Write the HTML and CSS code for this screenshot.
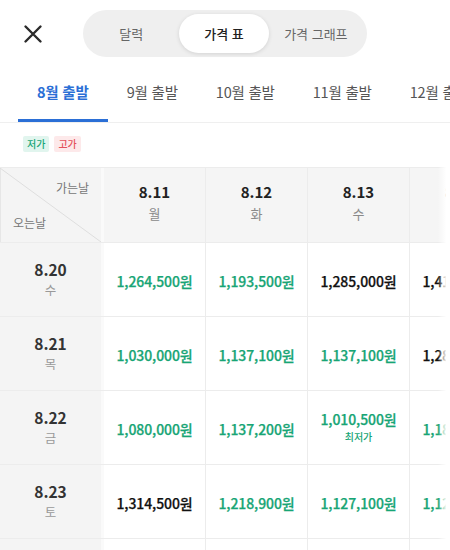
FILE: index.html
```html
<!DOCTYPE html>
<html lang="ko">
<head>
<meta charset="utf-8">
<link rel="stylesheet" href="styles.css">
</head>
<body>
<div class="page">
  <header class="topbar">
    <button class="close" aria-label="닫기">
      <svg width="20" height="20" viewBox="0 0 20 20"><path d="M2.5 2.5 L17.5 17.5 M17.5 2.5 L2.5 17.5" stroke="#2b2b2b" stroke-width="2.4" stroke-linecap="round" fill="none"/></svg>
    </button>
    <div class="segment">
      <span class="seg">달력</span>
      <span class="seg active">가격 표</span>
      <span class="seg">가격 그래프</span>
    </div>
  </header>

  <nav class="tabs">
    <span class="tab active">8월 출발</span>
    <span class="tab">9월 출발</span>
    <span class="tab">10월 출발</span>
    <span class="tab">11월 출발</span>
    <span class="tab">12월 출발</span>
  </nav>

  <div class="legend">
    <span class="tag low">저가</span>
    <span class="tag high">고가</span>
  </div>

  <div class="table-wrap">
    <div class="table">
      <div class="row head">
        <div class="cell corner">
          <svg class="diag" viewBox="0 0 100 100" preserveAspectRatio="none"><line x1="0" y1="0" x2="100" y2="100" stroke="#dedede" stroke-width="1" vector-effect="non-scaling-stroke"/></svg>
          <span class="go">가는날</span>
          <span class="back">오는날</span>
        </div>
        <div class="cell hd"><b>8.11</b><i>월</i></div>
        <div class="cell hd"><b>8.12</b><i>화</i></div>
        <div class="cell hd"><b>8.13</b><i>수</i></div>
        <div class="cell hd"><b>8.14</b><i>목</i></div>
      </div>
      <div class="row">
        <div class="cell rh"><b>8.20</b><i>수</i></div>
        <div class="cell price low">1,264,500원</div>
        <div class="cell price low">1,193,500원</div>
        <div class="cell price">1,285,000원</div>
        <div class="cell price">1,412,000원</div>
      </div>
      <div class="row">
        <div class="cell rh"><b>8.21</b><i>목</i></div>
        <div class="cell price low">1,030,000원</div>
        <div class="cell price low">1,137,100원</div>
        <div class="cell price low">1,137,100원</div>
        <div class="cell price">1,285,500원</div>
      </div>
      <div class="row">
        <div class="cell rh"><b>8.22</b><i>금</i></div>
        <div class="cell price low">1,080,000원</div>
        <div class="cell price low">1,137,200원</div>
        <div class="cell price low best"><span>1,010,500원</span><small>최저가</small></div>
        <div class="cell price low">1,183,000원</div>
      </div>
      <div class="row">
        <div class="cell rh"><b>8.23</b><i>토</i></div>
        <div class="cell price">1,314,500원</div>
        <div class="cell price low">1,218,900원</div>
        <div class="cell price low">1,127,100원</div>
        <div class="cell price low">1,127,100원</div>
      </div>
      <div class="row">
        <div class="cell rh"><b>8.24</b><i>일</i></div>
        <div class="cell price">1,352,000원</div>
        <div class="cell price low">1,248,300원</div>
        <div class="cell price low">1,196,000원</div>
        <div class="cell price">1,301,200원</div>
      </div>
    </div>
    <div class="fade"></div>
  </div>
</div>
</body>
</html>
```

FILE: styles.css
```css
* { box-sizing: border-box; }
html, body { margin: 0; padding: 0; }
body {
  width: 450px;
  height: 550px;
  overflow: hidden;
  background: #fff;
  font-family: "Noto Sans CJK KR", "Noto Sans", sans-serif;
  color: #222;
}
.page { width: 450px; }

.topbar {
  height: 67px;
  display: flex;
  align-items: center;
  padding: 0 0 0 22px;
}
.close {
  border: 0;
  background: none;
  padding: 0;
  width: 22px;
  height: 22px;
  display: flex;
  align-items: center;
  justify-content: center;
}
.segment {
  margin-left: 39px;
  width: 284px;
  height: 47px;
  background: #efefef;
  border-radius: 24px;
  display: flex;
  align-items: center;
  padding: 0 4px 0 12px;
}
.seg {
  font-size: 13px;
  color: #666;
  height: 39px;
  display: flex;
  align-items: center;
  justify-content: center;
  border-radius: 20px;
}
.seg:nth-child(1) { width: 73px; margin-right: 12px; }
.seg:nth-child(2) { width: 90px; }
.seg:nth-child(3) { width: 95px; }
.seg.active {
  background: #fff;
  color: #222;
  font-weight: 500;
  box-shadow: 0 1px 4px rgba(0,0,0,0.12);
}

.tabs {
  display: flex;
  padding-left: 18px;
  height: 56px;
  border-bottom: 1px solid #efefef;
  white-space: nowrap;
}
.tab {
  padding: 0 19px;
  font-size: 14.5px;
  color: #555;
  display: flex;
  align-items: center;
  padding-bottom: 3px;
  border-bottom: 3px solid transparent;
  letter-spacing: -0.2px;
}
.tab.active {
  color: #2b6fd6;
  font-weight: 700;
  border-bottom-color: #2b6fd6;
}

.legend {
  display: flex;
  gap: 5px;
  padding: 13px 0 15px 23px;
}
.tag {
  font-size: 10px;
  line-height: 16px;
  height: 16px;
  padding: 0 4px;
  border-radius: 2px;
  font-weight: 500;
}
.tag.low { background: #e1f5ee; color: #19a676; }
.tag.high { background: #fde9ea; color: #e4525c; }

.table-wrap {
  position: relative;
  width: 450px;
  overflow: hidden;
}
.table {
  display: flex;
  flex-direction: column;
  width: 512px;
  border-top: 1px solid #ececec;
}
.row {
  display: grid;
  grid-template-columns: 104px 102px 102px 102px 102px;
  height: 74px;
  border-bottom: 1px solid #ececec;
}
.row.head { height: 75px; background: #f5f5f5; }
.cell {
  border-right: 1px solid #ececec;
  display: flex;
  flex-direction: column;
  align-items: center;
  justify-content: center;
}
.cell b { font-weight: 700; }
.cell i { font-style: normal; }

.corner {
  position: relative;
  background: #f4f4f4;
  border-right: 3px solid #fafafa;
  box-shadow: 1px 0 0 #e6e6e6 inset;
}
.diag {
  position: absolute;
  left: 0; top: 0;
  width: 100%; height: 100%;
}
.corner span {
  position: absolute;
  font-size: 12px;
  color: #777;
}
.corner .go { right: 12px; top: 11px; }
.corner .back { left: 13px; bottom: 11px; }

.hd { padding-bottom: 4px; }
.hd b { font-size: 15px; color: #222; line-height: 20px; }
.hd i { font-size: 13px; color: #8a8a8a; line-height: 22px; margin-top: 1px; }

.rh {
  background: #f4f4f4;
  border-right: 3px solid #fafafa;
}
.rh b { font-size: 15.5px; color: #333; line-height: 20px; }
.rh i { font-size: 12.5px; color: #999; line-height: 20px; margin-top: 1px; }

.price {
  font-size: 14px;
  font-weight: 500;
  color: #111;
  letter-spacing: -0.1px;
  padding-top: 2px;
  white-space: nowrap;
  -webkit-text-stroke: 0.25px currentColor;
}
.price.low { color: #17a575; }
.price.best { padding-top: 0; padding-bottom: 4px; }
.price.best span { line-height: 20px; }
.price small {
  font-size: 10px;
  font-weight: 500;
  line-height: 13px;
  margin-top: 1px;
  -webkit-text-stroke: 0;
}

.fade {
  position: absolute;
  top: 0; right: 0;
  width: 12px;
  height: 100%;
  background: linear-gradient(to right, rgba(255,255,255,0), #fff 70%);
}
```
